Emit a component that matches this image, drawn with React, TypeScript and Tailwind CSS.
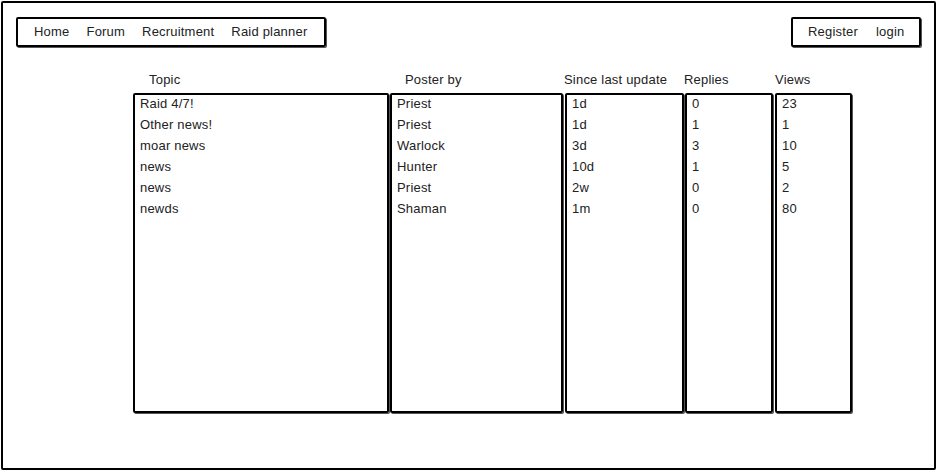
import React from "react";

const rows = [
  ["Raid 4/7!", "Priest", "1d", "0", "23"],
  ["Other news!", "Priest", "1d", "1", "1"],
  ["moar news", "Warlock", "3d", "3", "10"],
  ["news", "Hunter", "10d", "1", "5"],
  ["news", "Priest", "2w", "0", "2"],
  ["newds", "Shaman", "1m", "0", "80"],
];

const cols = [
  { title: "Topic", w: "w-[256px]", ml: "ml-0", hp: "pl-[16px]" },
  { title: "Poster by", w: "w-[173px]", ml: "ml-[1px]", hp: "pl-[15px]" },
  { title: "Since last update", w: "w-[119px]", ml: "ml-[2px]", hp: "-ml-[1px]" },
  { title: "Replies", w: "w-[88px]", ml: "ml-[1px]", hp: "-ml-[1px]" },
  { title: "Views", w: "w-[77px]", ml: "ml-[2px]", hp: "pl-0" },
];

export default function App() {
  return (
    <div
      className="w-[938px] h-[471px] bg-white p-[1px] text-[13px] tracking-[0.2px] text-[#222]"
      style={{ fontFamily: '"Liberation Sans", Arial, sans-serif' }}
    >
      <div className="w-[935px] h-[469px] border-2 border-black rounded-[2px] flex flex-col">
        <div className="flex justify-between pt-[14px] pl-[13px] pr-[13px]">
          <div className="h-[30px] w-[310px] border-2 border-black rounded-[2px] flex items-center pl-[16px] gap-[17px] shadow-[1px_1px_0_#555]">
            <span>Home</span>
            <span>Forum</span>
            <span>Recruitment</span>
            <span>Raid planner</span>
          </div>
          <div className="h-[30px] w-[130px] border-2 border-black rounded-[2px] flex items-center pl-[15px] gap-[18px] shadow-[1px_1px_0_#555]">
            <span>Register</span>
            <span>login</span>
          </div>
        </div>
        <div className="flex mt-[22px] ml-[130px]">
          {cols.map((c, ci) => (
            <div key={c.title} className={`${c.w} ${c.ml} flex flex-col`}>
              <div className={`h-[21px] leading-[21px] mb-[3px] whitespace-nowrap ${c.hp}`}>
                {c.title}
              </div>
              <div className="h-[320px] border-2 border-black rounded-[2px] px-[5px] shadow-[1px_1px_0_#555]">
                <div className="-mt-[2px]">
                  {rows.map((r, ri) => (
                    <div key={ri} className="h-[21px] leading-[21px] whitespace-nowrap">
                      {r[ci]}
                    </div>
                  ))}
                </div>
              </div>
            </div>
          ))}
        </div>
      </div>
    </div>
  );
}
